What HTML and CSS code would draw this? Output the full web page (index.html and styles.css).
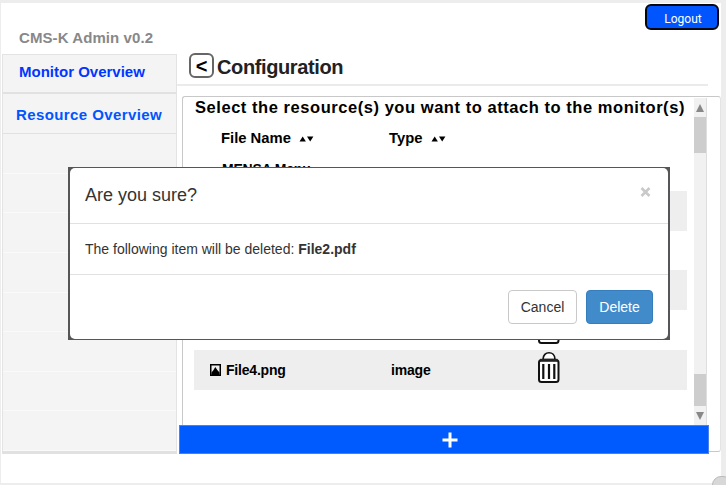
FILE: index.html
```html
<!DOCTYPE html>
<html lang="en">
<head>
<meta charset="utf-8">
<title>CMS-K Admin</title>
<link rel="stylesheet" href="styles.css">
</head>
<body>
<svg class="defs" width="0" height="0">
  <symbol id="trash" viewBox="0 0 22 32">
    <path d="M5 8.5C5 -.5 17 -.5 17 8.5z" fill="#fff" stroke="#111" stroke-width="1.7"/>
    <rect x="1" y="9" width="19.5" height="22" rx="2.5" fill="#fff" stroke="#111" stroke-width="2"/>
    <path d="M2 9.3H19.5" stroke="#222" stroke-width="3"/>
    <path d="M5.3 13V28M11 13V28M16.3 13V28" stroke="#111" stroke-width="2.2"/>
  </symbol>
  <symbol id="image" viewBox="0 0 11 12">
    <rect x=".75" y=".75" width="9.5" height="10.5" fill="#eee" stroke="#000" stroke-width="1.5"/>
    <path d="M1.5 11V8.5L3.5 6L5.3 3L7.3 6L9.5 8.5V11z"/>
  </symbol>
  <symbol id="sort" viewBox="0 0 15 6">
    <path d="M.5 5.5L3.7 .5L6.9 5.5zM8 .5H14.4L11.2 5.5z"/>
  </symbol>
</svg>
<div class="page">
  <header class="top">
    <div class="brand">CMS-K Admin v0.2</div>
    <button class="logout">Logout</button>
  </header>
  <div class="body">
    <nav class="side">
      <a class="item first">Monitor Overview</a>
      <a class="item second">Resource Overview</a>
      <span class="slot"></span><span class="slot"></span><span class="slot"></span><span class="slot"></span>
      <span class="slot"></span><span class="slot"></span><span class="slot"></span><span class="slot"></span>
    </nav>
    <main class="main">
      <div class="title"><button class="back">&lt;</button><h1>Configuration</h1></div>
      <section class="panel">
        <div class="list">
          <h2>Select the resource(s) you want to attach to the monitor(s)</h2>
          <div class="cols"><span class="name">File Name <svg class="sort"><use href="#sort"/></svg></span><span class="type">Type <svg class="sort"><use href="#sort"/></svg></span></div>
          <div class="row"><span class="file folder">MENSA Menu</span></div>
          <div class="row odd"></div>
          <div class="row"></div>
          <div class="row odd"></div>
          <div class="row"><span class="file"></span><span class="kind"></span><svg class="trash"><use href="#trash"/></svg></div>
          <div class="row odd"><span class="file"><svg class="pic"><use href="#image"/></svg>File4.png</span><span class="kind">image</span><svg class="trash"><use href="#trash"/></svg></div>
        </div>
        <div class="scroll">
          <span class="up"></span><span class="thumb"></span><span class="track"></span><span class="thumb low"></span><span class="down"></span>
        </div>
      </section>
      <button class="add"><svg width="16" height="16" viewBox="0 0 16 16"><path d="M8 .5V15.5M.5 8H15.5" stroke="#fff" stroke-width="3"/></svg></button>
    </main>
  </div>
</div>
<div class="corner"></div>
<div class="frame">
  <div class="dialog">
    <div class="head"><span>Are you sure?</span><svg class="close" viewBox="0 0 10 10"><path d="M1 1L9 9M9 1L1 9" stroke="#c9c9c9" stroke-width="2.6"/></svg></div>
    <div class="message"><span>The following item will be deleted: <b>File2.pdf</b></span></div>
    <div class="actions"><button class="btn">Cancel</button><button class="btn primary">Delete</button></div>
  </div>
</div>
</body>
</html>
```
FILE: styles.css
```css
* { box-sizing: border-box; }
body { margin: 0; width: 726px; height: 485px; overflow: hidden; background: #ededed; font-family: "Liberation Sans", Arial, sans-serif; color: #000; padding: 3px 5px 2px 1px; position: relative; }
button { font-family: inherit; padding: 0; }
.defs { position: absolute; }
.page { height: 480px; background: #fff; }
.top { height: 51px; display: flex; justify-content: space-between; padding: 1px 2px 0 18px; }
.brand { font-size: 15px; line-height: 18px; font-weight: bold; color: #888; padding-top: 25px; letter-spacing: .08px; white-space: nowrap; }
.logout { width: 74px; height: 26px; border: 2px solid #05070f; border-radius: 6px; background: #0055ff; color: #fff; font: 12px Roboto, sans-serif; padding: 3px 0 0 2px; }
.body { display: flex; height: 400px; padding-left: 1px; }
.side { width: 175px; height: 400px; flex: none; display: flex; flex-direction: column; background: #f4f4f4; border: 1px solid #e3e3e3; border-bottom: 3px solid #e1e1e1; }
.item { height: 39px; font-weight: bold; font-size: 15px; white-space: nowrap; border-bottom: 2px solid #e1e1e1; color: #0037ff; line-height: 34px; padding-left: 16px; letter-spacing: 0; }
.item.second { height: 40px; color: #0055ff; padding-left: 13px; line-height: 42px; border-bottom-width: 1px; letter-spacing: .4px; }
.slot { flex: 1; border-bottom: 1px solid #fafafa; }
.main { flex: 1; display: flex; flex-direction: column; min-width: 0; }
.title { width: 531px; height: 32px; border-bottom: 2px solid #ebebeb; display: flex; padding-left: 12px; }
.back { width: 25px; height: 25px; margin-top: -1px; border: 2px solid #666; border-radius: 6px; background: #fff; font-weight: bold; font-size: 20px; line-height: 20px; }
h1 { margin: 0 0 0 3px; font-size: 20px; line-height: 26px; color: #222; white-space: nowrap; letter-spacing: -.38px; }
.panel { flex: none; margin: 10px 0 0 5px; height: 356px; display: flex; border: 1px solid #c8c8c8; border-right-color: #e4e4e4; border-radius: 3px; padding: 1px 12px 26px 11px; }
.list { width: 493px; flex: none; }
h2 { margin: 0 0 0 1px; font-size: 16.5px; line-height: 19px; height: 26px; letter-spacing: .55px; white-space: nowrap; }
.cols { height: 27px; display: flex; font-size: 14.8px; line-height: 28px; font-weight: bold; padding-left: 27px; white-space: nowrap; }
.cols .name { width: 168px; }
.sort { width: 15px; height: 6px; margin-left: 4px; position: relative; top: -1px; }
.row { height: 39.8px; display: flex; align-items: center; font-size: 14px; letter-spacing: -.2px; font-weight: bold; white-space: nowrap; }
.odd { background: #eee; }
.file { width: 197px; padding-left: 16px; display: flex; gap: 5px; align-items: center; }
.file.folder { padding: 0 0 3px 28px; }
.pic { width: 11px; height: 12px; }
.kind { width: 147px; }
.trash { width: 22px; height: 32px; margin: -5px 0 0 0; }
.scroll { width: 13px; margin-left: 7px; display: flex; flex-direction: column; background: #f1f1f1; border-right: 1px solid #dedede; }
.up, .down { height: 19px; display: flex; align-items: center; justify-content: center; }
.up::before, .down::before { content: ""; border: 4px solid transparent; border-top: 0; border-bottom: 8px solid #888; }
.down::before { transform: rotate(180deg); }
.thumb { height: 36px; background: #cdcdcd; }
.low { height: 32px; }
.track { flex: 1; }
.add { flex: none; z-index: 1; margin: -27px 0 0 2px; width: 530px; height: 29px; background: #005bff; border: 1px solid #4b80e6; display: flex; align-items: center; justify-content: center; padding-left: 11px; }
.corner { position: absolute; right: -6px; bottom: -9px; width: 20px; height: 18px; background: #d8d8d8; border: 1px solid #bbb; border-radius: 9px; }
.frame { position: absolute; z-index: 2; left: 68px; top: 167px; width: 602px; height: 173px; padding: 1px 2px 1px 2px; background: #565658; }
.dialog { height: 171px; background: #fff; border-radius: 5px; }
.head { height: 56px; border-bottom: 1px solid #e1e1e1; display: flex; justify-content: space-between; padding: 16px 17px 0 15px; font-size: 18px; line-height: 22px; color: #333; white-space: nowrap; }
.close { width: 11px; height: 10px; margin-top: 3px; }
.message { height: 51px; border-bottom: 1px solid #e1e1e1; padding-left: 15px; font-size: 14px; line-height: 50px; color: #333; white-space: nowrap; }
.actions { display: flex; justify-content: flex-end; gap: 9px; padding: 15px 15px 0; }
.btn { width: 69px; height: 34px; font-size: 14px; border: 1px solid #c9c9c9; border-radius: 4px; background: #fff; color: #333; }
.primary { width: 67px; border-color: #357ebd; background: #428bca; color: #fff; }
```
